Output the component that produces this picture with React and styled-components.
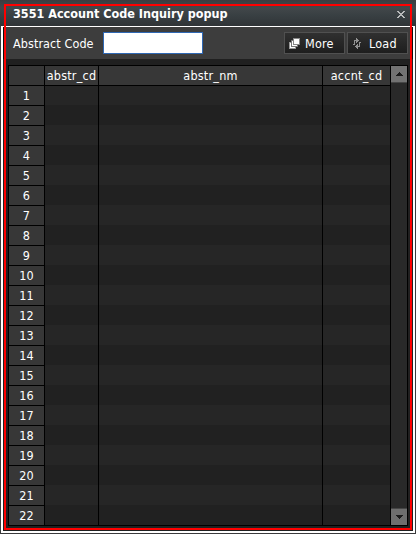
import React from "react";
import styled, { createGlobalStyle } from "styled-components";

const GlobalStyle = createGlobalStyle`
  *, *::before, *::after { box-sizing: border-box; }
  body { margin: 0; background: #3a3e41; }
`;

const Window = styled.div`
  position: relative;
  width: 416px;
  height: 534px;
  display: flex;
  flex-direction: column;
  overflow: hidden;
  padding: 0 1px 1px;
  background: #3a3b3d;
  color: #fff;
  font-family: "DejaVu Sans", sans-serif;
  font-stretch: condensed;
  font-size: 12.5px;
`;

const TitleBar = styled.header`
  flex: none;
  height: 26px;
  margin: 0 -1px;
  padding: 2px 10px 0 13px;
  display: flex;
  align-items: center;
  justify-content: space-between;
  background: linear-gradient(#3a3d40 0, #42474a 8px, #394043 15px, #303437 26px);
`;

const Title = styled.h1`
  margin: 0;
  font-size: 12.5px;
  line-height: 20px;
  font-weight: bold;
  white-space: nowrap;
`;

const CloseButton = styled.button`
  padding: 1px 0 0;
  border: 0;
  background: none;
  color: #b8babb;
  display: flex;
`;

const Frame = styled.main`
  flex: 1;
  min-height: 0;
  display: flex;
  flex-direction: column;
  border: solid #fff;
  border-width: 1px 2px 2px;
  background: #202020;
`;

const Toolbar = styled.div`
  flex: none;
  height: 32px;
  padding: 0 4px 0 9px;
  display: flex;
  align-items: center;
  border: solid #0c0c0c;
  border-width: 0 1px;
  background: #3d3d3d;
`;

const Label = styled.label`
  width: 90px;
  padding-top: 1px;
  white-space: nowrap;
  letter-spacing: 0.08px;
`;

const CodeInput = styled.input`
  width: 100px;
  height: 22px;
  padding: 0 4px;
  border: 1px solid #2f68b4;
  border-radius: 0;
  background: #fff;
  outline: 0;
`;

const Actions = styled.div`
  margin-left: auto;
  display: flex;
  gap: 2px;
`;

const ActionButton = styled.button`
  width: 61px;
  height: 22px;
  padding: 1px 0 0 ${(p) => p.$inset}px;
  display: flex;
  align-items: center;
  border: 1px solid #505050;
  background: linear-gradient(#303030, #1e1e1e);
  color: #fff;
  font: inherit;
  letter-spacing: 0.2px;

  svg { flex: none; margin-right: ${(p) => p.$gap}px; }
`;

const GridArea = styled.div`
  width: 400px;
  height: 461px;
  margin: 6px 0 0 5px;
  display: grid;
  grid-template-columns: 382px 16px;
  border: 1px solid #000;
  background: #000;
`;

const Sheet = styled.div`
  display: grid;
  grid-template-columns: 35px 53px 223px 67px;
  grid-template-rows: 19px;
  grid-auto-rows: 19px;
  gap: 1px;
`;

const HeadCell = styled.div`
  display: flex;
  align-items: center;
  justify-content: center;
  padding-top: 1px;
  background: #373737;
  white-space: nowrap;
  line-height: 18px;
  letter-spacing: 0.22px;
`;

const BodyCell = styled.div`
  margin-top: ${(p) => (p.$first ? "0" : "-1px")};
  background: ${(p) => (p.$odd ? "#262626" : "#212121")};
`;

const ScrollBar = styled.div`
  display: flex;
  flex-direction: column;
  justify-content: space-between;
  background: #292929;
`;

const ScrollButton = styled.button`
  height: 17px;
  padding: 0;
  display: flex;
  align-items: center;
  justify-content: center;
  border: 0 solid #464646;
  border-width: ${(p) => (p.$down ? "1px 0 0" : "0 0 1px")};
  background: ${(p) => (p.$down ? "#6e6e6e" : "#727272")};
`;

const Highlight = styled.div`
  position: absolute;
  inset: 4px;
  border: 2px solid #f00;
  pointer-events: none;
`;

const CloseIcon = () => (
  <svg width="9" height="7" viewBox="0 0 9 7" shapeRendering="crispEdges">
    <path fill="currentColor" d="M0 0h2v1H0zM6 0h2v1H6zM1 1h2v1H1zM5 1h2v1H5zM2 2h4v1H2zM3 3h2v1H3zM2 4h4v1H2zM1 5h2v1H1zM5 5h2v1H5zM0 6h2v1H0zM6 6h2v1H6z" />
  </svg>
);

const StackIcon = () => (
  <svg width="11" height="11" viewBox="0 0 11 11" shapeRendering="crispEdges">
    <path fill="#999" d="M0 4h7v7H0z" />
    <path fill="#fff" d="M1 5h5v5H1z" />
    <path fill="#777" d="M2 2h7v7H2z" />
    <path fill="#fff" d="M3 3h5v5H3z" />
    <path fill="#888" d="M4 0h7v7H4z" />
    <path fill="#fff" d="M5 1h5v5H5z" />
  </svg>
);

const ReloadIcon = () => (
  <svg width="8" height="11" viewBox="0 0 8 11" shapeRendering="crispEdges">
    <path fill="#929292" d="M3 0h1v1H3zM3 1h2v1H3zM1 2h5v1H1zM3 3h2v1H3zM3 4h1v1H3zM1 3h1v4H1zM0 6h1v1H0zM4 6h1v1H4zM3 7h2v1H3zM2 8h5v1H2zM3 9h2v1H3zM4 10h1v1H4zM6 4h1v4H6zM7 4h1v1H7z" />
  </svg>
);

const Arrow = ({ down }) => (
  <svg width="7" height="4" viewBox="0 0 7 4" shapeRendering="crispEdges">
    <path fill="#1b1b1b" d={down ? "M0 0h7v1H0zM1 1h5v1H1zM2 2h3v1H2zM3 3h1v1H3z" : "M3 0h1v1H3zM2 1h3v1H2zM1 2h5v1H1zM0 3h7v1H0z"} />
  </svg>
);

const columns = ["abstr_cd", "abstr_nm", "accnt_cd"];
const rows = Array.from({ length: 22 }, (_, i) => i + 1);

export default function App() {
  return (
    <>
      <GlobalStyle />
      <Window>
        <TitleBar>
          <Title>3551 Account Code Inquiry popup</Title>
          <CloseButton aria-label="Close"><CloseIcon /></CloseButton>
        </TitleBar>
        <Frame>
          <Toolbar>
            <Label htmlFor="code">Abstract Code</Label>
            <CodeInput id="code" />
            <Actions>
              <ActionButton $inset={4} $gap={5}><StackIcon />More</ActionButton>
              <ActionButton $inset={5} $gap={8}><ReloadIcon />Load</ActionButton>
            </Actions>
          </Toolbar>
          <GridArea>
            <Sheet>
              <HeadCell />
              {columns.map((name) => <HeadCell key={name}>{name}</HeadCell>)}
              {rows.map((n) => (
                <React.Fragment key={n}>
                  <HeadCell>{n}</HeadCell>
                  {columns.map((name) => (
                    <BodyCell key={name} $odd={n % 2 === 1} $first={n === 1} />
                  ))}
                </React.Fragment>
              ))}
            </Sheet>
            <ScrollBar>
              <ScrollButton aria-label="Scroll up"><Arrow /></ScrollButton>
              <ScrollButton $down aria-label="Scroll down"><Arrow down /></ScrollButton>
            </ScrollBar>
          </GridArea>
        </Frame>
        <Highlight />
      </Window>
    </>
  );
}
